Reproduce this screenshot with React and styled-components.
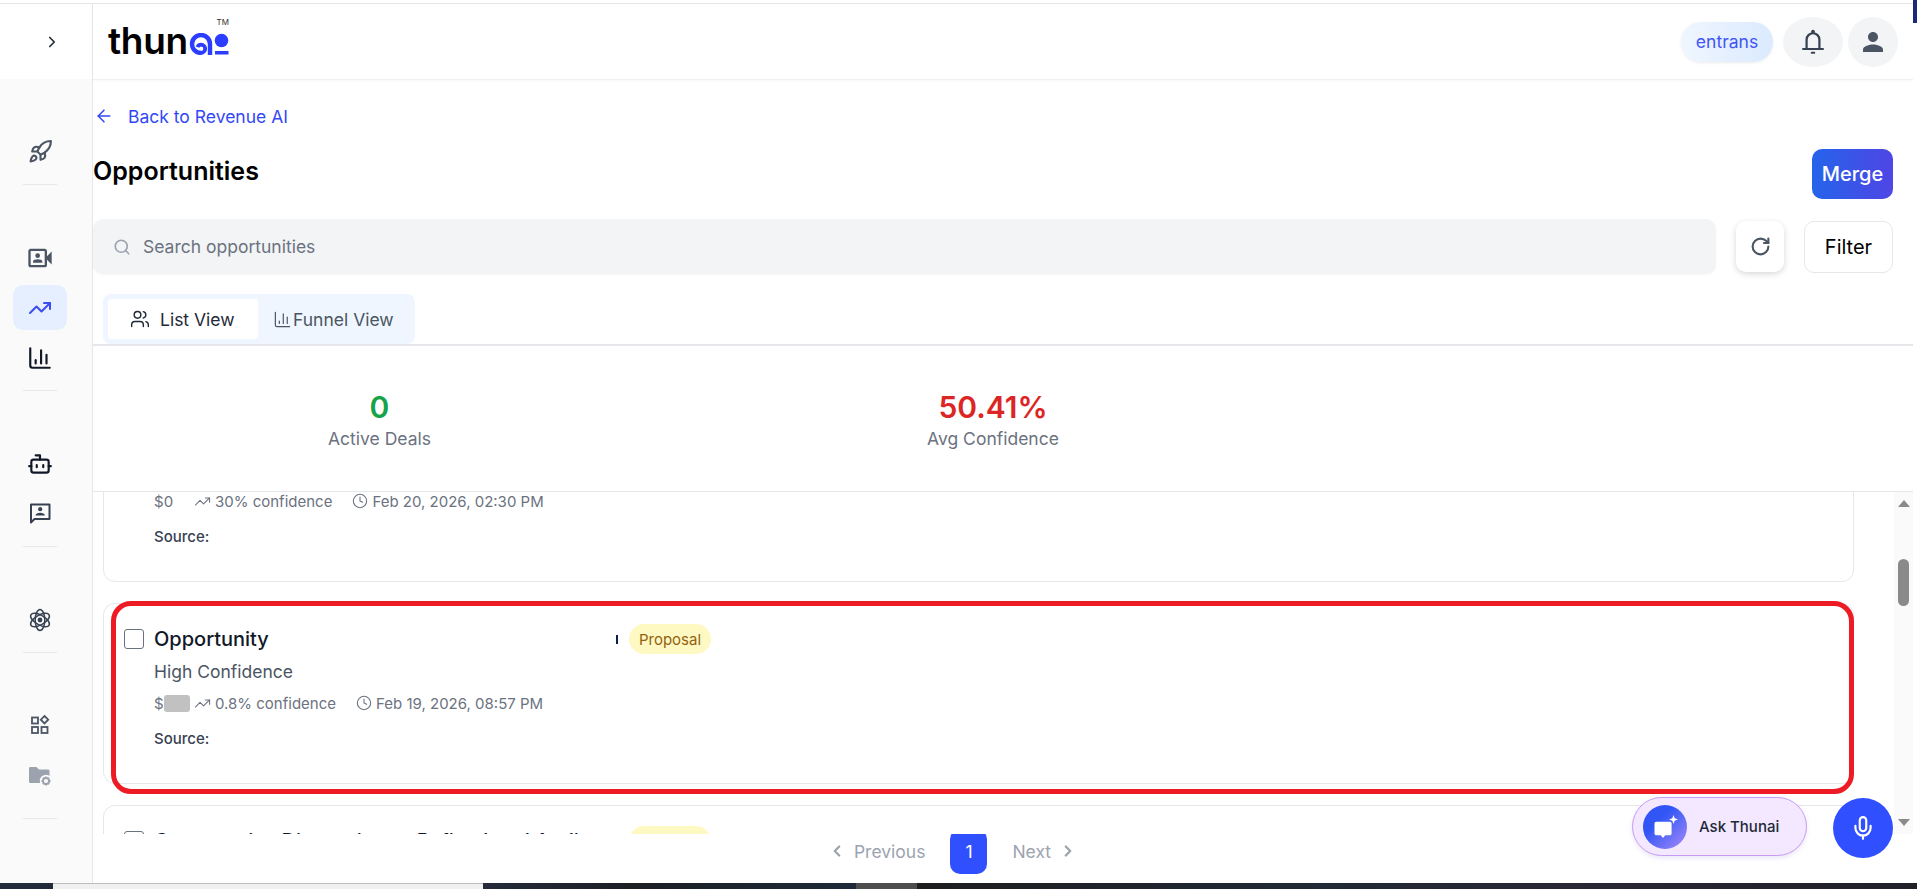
import React from "react";
import styled, { createGlobalStyle } from "styled-components";
import {
  ArrowLeft,
  Bot,
  ChartColumn,
  ChevronLeft,
  ChevronRight,
  Clock,
  Mic,
  RotateCw,
  Rocket,
  Search,
  TrendingUp,
  Users,
} from "lucide-react";
import { MdOutlineVideoCameraFront, MdPerson } from "react-icons/md";

const GlobalStyle = createGlobalStyle`
  html, body, #root {
    margin: 0;
    padding: 0;
    height: 100%;
  }
  body {
    background: #fff;
    font-family: Inter, "Liberation Sans", sans-serif;
    overflow: hidden;
  }
  * {
    box-sizing: border-box;
  }
`;

function BellIcon() {
  return (
    <svg width="28" height="28" viewBox="0 0 24 24" fill="none" stroke="#374151" strokeWidth="1.9" strokeLinecap="round">
      <path d="M6.500 17.500V10a5.500 5.500 0 0 1 11 0v7.500" />
      <path d="M3.500 18h17" />
      <circle cx="12" cy="3.200" r="1.100" fill="#374151" strokeWidth="1" />
      <path d="M11 21.200h2" />
    </svg>
  );
}

function ContactBubbleIcon() {
  return (
    <svg width="24" height="24" viewBox="0 0 24 24" fill="none">
      <path d="M3 3.500h18.500v14.500H6.500L3 21.500z" stroke="#374151" strokeWidth="2" strokeLinejoin="round" />
      <circle cx="12.200" cy="8.200" r="2.100" fill="#374151" />
      <path d="M7.500 14.500c0-1.900 2.400-2.800 4.700-2.800s4.700.9 4.700 2.800z" fill="#374151" />
    </svg>
  );
}

function AtomIcon() {
  return (
    <svg width="24" height="24" viewBox="0 0 24 24" fill="none" stroke="#374151" strokeWidth="1.500">
      <ellipse cx="12" cy="12" rx="4.800" ry="10.500" />
      <ellipse cx="12" cy="12" rx="4.800" ry="10.500" transform="rotate(60 12 12)" />
      <ellipse cx="12" cy="12" rx="4.800" ry="10.500" transform="rotate(120 12 12)" />
      <circle cx="12" cy="12" r="2.400" fill="#374151" stroke="none" />
    </svg>
  );
}

function AppsIcon() {
  return (
    <svg width="22" height="22" viewBox="0 0 22 22" fill="none" stroke="#4b5563" strokeWidth="1.800">
      <rect x="3" y="3.500" width="6" height="6" />
      <rect x="3" y="13" width="6" height="6" />
      <rect x="12.500" y="13" width="6" height="6" />
      <path d="M15.500 2l3.700 3.700-3.700 3.700-3.700-3.700z" />
    </svg>
  );
}

function FolderGearIcon() {
  return (
    <svg width="24" height="24" viewBox="0 0 24 24" fill="none">
      <path d="M1 4.500c0-.8.6-1.500 1.500-1.500h6l2.500 2.500h9c.8 0 1.500.7 1.500 1.500v12H2.500c-.9 0-1.500-.7-1.500-1.500z" fill="#9ca3af" />
      <circle cx="18" cy="17" r="6.200" fill="#fafafa" />
      <circle cx="18" cy="17" r="3" stroke="#9ca3af" strokeWidth="1.800" />
      <path d="M18 12.500v1.500M18 20v1.500M13.500 17H15M21 17h1.500M14.900 13.900l1 1M20.100 19.100l1 1M14.900 20.100l1-1M20.100 14.900l1-1" stroke="#9ca3af" strokeWidth="1.800" />
    </svg>
  );
}

function LogoMark() {
  return (
    <svg width="40" height="22" viewBox="0 0 40 22" fill="none">
      <path d="M21 22V11a9 9 0 1 0-9 9" stroke="#2b3dff" strokeWidth="4.400" />
      <path d="M12 20a4.200 4.200 0 0 0 0-8.400 3.800 3.800 0 0 0-3.500 2.600" stroke="#2b3dff" strokeWidth="3.800" />
      <circle cx="32.500" cy="7.500" r="6.800" fill="#2b3dff" />
      <rect x="26" y="18" width="13.500" height="3.500" fill="#2b3dff" />
    </svg>
  );
}

function AskIcon() {
  return (
    <svg width="28" height="28" viewBox="0 0 28 28" fill="none">
      <path d="M3.500 10.500c0-1 .8-1.800 1.800-1.800h13.500c1 0 1.800.8 1.800 1.800v10c0 1-.8 1.800-1.800 1.800h-4.500L12 25l-2.300-2.700H5.300c-1 0-1.800-.8-1.800-1.800z" fill="#fff" />
      <path d="M22.500 2l1.200 3.300L27 6.500l-3.300 1.200-1.200 3.300-1.200-3.300L18 6.500l3.300-1.200z" fill="#fff" />
    </svg>
  );
}

const Card = ({ title, confidence, amount, blurred, date, stage, highlighted, mark }) => (
  <CardBox>
    <CardHead>
      <Check />
      <CardTitle>{title}</CardTitle>
      <ClippedMark $visible={mark} />
      <Badge>{stage}</Badge>
    </CardHead>
    <CardBody>
      <Confidence>High Confidence</Confidence>
      <Meta>
        <Amount>
          ${amount}
          {blurred && <Redaction />}
        </Amount>
        <MetaGroup>
          <TrendingUp size={17} strokeWidth={1.5} />
          {confidence} confidence
        </MetaGroup>
        <MetaGroup>
          <Clock size={16} strokeWidth={1.6} />
          {date}
        </MetaGroup>
      </Meta>
      <Source>Source:</Source>
    </CardBody>
    {highlighted && <RedOutline />}
  </CardBox>
);

export default function App() {
  return (
    <>
      <GlobalStyle />
      <Page>
        <TopRule />
        <CornerBlock />
        <Body>
          <Sidebar>
            <SideTop>
              <ChevronRight size={18} strokeWidth={2.2} color="#1f2937" />
            </SideTop>
            <SideNav>
              <NavItem $top={58}>
                <Rocket size={25} strokeWidth={2} color="#4b5563" />
              </NavItem>
              <NavRule $top={19} />
              <NavItem $top={59}>
                <MdOutlineVideoCameraFront size={28} color="#4b5563" />
              </NavItem>
              <ActiveItem>
                <TrendingUp size={24} strokeWidth={2} color="#3b4cf5" />
              </ActiveItem>
              <NavItem $top={14}>
                <ChartColumn size={26} strokeWidth={2} color="#111827" />
              </NavItem>
              <NavRule $top={18} />
              <NavItem $top={59}>
                <Bot size={26} strokeWidth={2} color="#111827" />
              </NavItem>
              <NavItem $top={21}>
                <ContactBubbleIcon />
              </NavItem>
              <NavRule $top={19} />
              <NavItem $top={59}>
                <AtomIcon />
              </NavItem>
              <NavRule $top={18} />
              <NavItem $top={58}>
                <AppsIcon />
              </NavItem>
              <NavItem $top={23}>
                <FolderGearIcon />
              </NavItem>
              <NavRule $top={28} />
            </SideNav>
          </Sidebar>

          <Main>
            <Header>
              <Logo>
                <LogoWord>thun</LogoWord>
                <LogoMark />
                <LogoTm>TM</LogoTm>
              </Logo>
              <HeaderRight>
                <OrgPill>entrans</OrgPill>
                <RoundButton $wide>
                  <BellIcon />
                </RoundButton>
                <RoundButton>
                  <MdPerson size={30} color="#4b5563" />
                </RoundButton>
              </HeaderRight>
            </Header>

            <Controls>
              <BackLink>
                <ArrowLeft size={20} strokeWidth={1.8} />
                Back to Revenue AI
              </BackLink>
              <TitleRow>
                <PageTitle>Opportunities</PageTitle>
                <MergeButton>Merge</MergeButton>
              </TitleRow>
              <Toolbar>
                <SearchBox>
                  <Search size={18} strokeWidth={2.2} color="#9ca3af" />
                  Search opportunities
                </SearchBox>
                <RefreshButton>
                  <RotateCw size={21} strokeWidth={2.4} color="#4b5563" />
                </RefreshButton>
                <FilterButton>Filter</FilterButton>
              </Toolbar>
              <Tabs>
                <Tab $active>
                  <Users size={20} strokeWidth={1.7} color="#1f2937" />
                  List View
                </Tab>
                <Tab>
                  <ChartColumn size={19} strokeWidth={1.5} color="#4b5563" />
                  Funnel View
                </Tab>
              </Tabs>
            </Controls>

            <Stats>
              <Stat>
                <StatValue $color="#16a34a">0</StatValue>
                <StatLabel>Active Deals</StatLabel>
              </Stat>
              <Stat>
                <StatValue $color="#dc2626">50.41%</StatValue>
                <StatLabel>Avg Confidence</StatLabel>
              </Stat>
            </Stats>

            <ListArea>
              <List>
                <ListInner>
                  <Card title="Opportunity" amount="0" confidence="30%" date="Feb 20, 2026, 02:30 PM" stage="Proposal" />
                  <Card title="Opportunity" amount="" blurred confidence="0.8%" date="Feb 19, 2026, 08:57 PM" stage="Proposal" highlighted mark />
                  <Card title="Comparative Discussions - Refine Lead Audit" amount="0" confidence="30%" date="Feb 19, 2026, 04:10 PM" stage="Proposal" />
                </ListInner>
              </List>
              <ScrollTrack>
                <ArrowUp />
                <ScrollThumb />
                <ArrowDown />
              </ScrollTrack>
            </ListArea>

            <Pager>
              <PagerLink>
                <ChevronLeft size={18} strokeWidth={3} />
                Previous
              </PagerLink>
              <PageNumber>1</PageNumber>
              <PagerLink>
                Next
                <ChevronRight size={18} strokeWidth={3} />
              </PagerLink>
            </Pager>

            <AskButton>
              <AskCircle>
                <AskIcon />
              </AskCircle>
              Ask Thunai
            </AskButton>
            <MicButton>
              <Mic size={26} strokeWidth={2} color="#fff" />
            </MicButton>
          </Main>
        </Body>
        <Taskbar>
          <TaskSegment $w="53px" $bg="#232a3a" />
          <TaskSegment $w="430px" $bg="#f0f0f0" $line />
          <TaskSegment $w="373px" $bg="linear-gradient(90deg, #252b3b, #1c1f24 40%, #1e2a38)" />
          <TaskSegment $w="61px" $bg="#4d4d4d" />
          <TaskSegment $w="1000px" $bg="linear-gradient(90deg, #1d1d1f, #212a36 40%, #2a2733 70%, #1f2028)" />
        </Taskbar>
      </Page>
    </>
  );
}

const Page = styled.div`
  position: relative;
  display: flex;
  flex-direction: column;
  height: 100vh;
  padding-right: 4px;
  overflow: hidden;
`;

const TopRule = styled.div`
  flex: none;
  height: 4px;
  margin-right: -4px;
  border-bottom: 1px solid #e5e5e5;
`;

const CornerBlock = styled.div`
  position: absolute;
  top: 0;
  right: 0;
  width: 4px;
  height: 23px;
  background: #1b2a78;
`;

const Body = styled.div`
  flex: 1;
  min-height: 0;
  display: flex;
`;

const Sidebar = styled.aside`
  flex: none;
  width: 93px;
  display: flex;
  flex-direction: column;
  border-right: 1px solid #e5e7eb;
  background: #fafafa;
`;

const SideTop = styled.div`
  flex: none;
  height: 75px;
  display: flex;
  align-items: center;
  justify-content: center;
  padding-left: 11px;
  background: #fff;
`;

const SideNav = styled.nav`
  display: flex;
  flex-direction: column;
  align-items: center;
  padding-right: 12px;
`;

const NavItem = styled.div`
  height: 28px;
  display: flex;
  align-items: center;
  justify-content: center;
  margin-top: ${(p) => p.$top}px;
`;

const NavRule = styled.div`
  width: 34px;
  height: 1px;
  margin-top: ${(p) => p.$top}px;
  background: #e5e7eb;
`;

const ActiveItem = styled.div`
  width: 54px;
  height: 45px;
  margin-top: 13px;
  display: flex;
  align-items: center;
  justify-content: center;
  border-radius: 10px;
  background: #e6efff;
`;

const Main = styled.main`
  position: relative;
  flex: 1;
  min-width: 0;
  display: flex;
  flex-direction: column;
`;

const Header = styled.header`
  flex: none;
  height: 76px;
  display: flex;
  align-items: center;
  justify-content: space-between;
  padding: 0 15px;
  border-bottom: 1px solid #f0f0f0;
  box-shadow: 0 1px 2px rgba(0, 0, 0, 0.03);
`;

const Logo = styled.div`
  position: relative;
  display: flex;
  align-items: flex-end;
  gap: 1px;
  height: 28px;
  margin-top: -1px;
`;

const LogoWord = styled.span`
  height: 28px;
  font-size: 37px;
  line-height: 28px;
  font-weight: 600;
  letter-spacing: -0.3px;
  color: #000;
`;

const LogoTm = styled.span`
  position: absolute;
  top: -10px;
  right: 0;
  font-size: 8px;
  color: #333;
`;

const HeaderRight = styled.div`
  display: flex;
  align-items: center;
  gap: 5px;
`;

const OrgPill = styled.div`
  width: 92px;
  height: 40px;
  margin-right: 5px;
  display: flex;
  align-items: center;
  justify-content: center;
  border-radius: 20px;
  font-size: 17.5px;
  color: #3f55f5;
  background: linear-gradient(90deg, #eff6ff, #dbeafe);
  box-shadow: 0 1px 3px rgba(0, 0, 0, 0.08);
`;

const RoundButton = styled.div`
  width: ${(p) => (p.$wide ? 60 : 50)}px;
  height: 50px;
  display: flex;
  align-items: center;
  justify-content: center;
  border-radius: 50%;
  background: #f3f4f6;
`;

const Controls = styled.section`
  flex: none;
  display: flex;
  flex-direction: column;
  padding: 25px 20px 0 0;
`;

const BackLink = styled.div`
  height: 22px;
  display: flex;
  align-items: center;
  gap: 14px;
  padding-left: 1px;
  font-size: 17.5px;
  color: #3348f5;
`;

const TitleRow = styled.div`
  height: 50px;
  margin-top: 22px;
  display: flex;
  align-items: center;
  justify-content: space-between;
`;

const PageTitle = styled.h1`
  margin: -6px 0 0;
  font-size: 25px;
  font-weight: 600;
  color: #000;
`;

const MergeButton = styled.button`
  width: 81px;
  height: 50px;
  padding: 0;
  border: 0;
  border-radius: 10px;
  font-family: inherit;
  font-size: 20px;
  font-weight: 500;
  color: #fff;
  background: linear-gradient(90deg, #2563eb, #4f46e5);
`;

const Toolbar = styled.div`
  height: 55px;
  margin-top: 20px;
  display: flex;
  align-items: center;
`;

const SearchBox = styled.div`
  flex: 1;
  height: 55px;
  display: flex;
  align-items: center;
  gap: 12px;
  padding-left: 20px;
  border-radius: 10px;
  font-size: 17.5px;
  color: #6b7280;
  background: #f3f4f6;
  box-shadow: 0 1px 2px rgba(0, 0, 0, 0.04);
`;

const RefreshButton = styled.div`
  width: 48px;
  height: 51px;
  margin-left: 20px;
  display: flex;
  align-items: center;
  justify-content: center;
  border-radius: 10px;
  background: #fff;
  box-shadow: 0 2px 6px rgba(0, 0, 0, 0.16);
`;

const FilterButton = styled.div`
  width: 89px;
  height: 52px;
  margin-left: 20px;
  display: flex;
  align-items: center;
  justify-content: center;
  border: 1px solid #e5e7eb;
  border-radius: 10px;
  font-size: 20px;
  color: #000;
`;

const Tabs = styled.div`
  width: 312px;
  height: 50px;
  margin: 20px 0 0 10px;
  padding: 5px;
  display: flex;
  border-radius: 8px;
  background: #eff6ff;
`;

const Tab = styled.div`
  width: ${(p) => (p.$active ? "150px" : "auto")};
  display: flex;
  align-items: center;
  gap: ${(p) => (p.$active ? 10 : 1)}px;
  padding-left: ${(p) => (p.$active ? 22 : 15)}px;
  border-radius: 3px;
  font-size: 17.5px;
  color: ${(p) => (p.$active ? "#1f2937" : "#4b5563")};
  background: ${(p) => (p.$active ? "#fff" : "transparent")};
`;

const Stats = styled.section`
  flex: none;
  height: 148px;
  display: grid;
  grid-template-columns: 573px 654px;
  border-top: 2px solid #e5e7eb;
  border-bottom: 1px solid #e5e7eb;
`;

const Stat = styled.div`
  display: flex;
  flex-direction: column;
  align-items: center;
  padding-top: 43px;
`;

const StatValue = styled.div`
  font-size: 30px;
  line-height: 36px;
  font-weight: 600;
  color: ${(p) => p.$color};
`;

const StatLabel = styled.div`
  margin-top: 2px;
  font-size: 17.5px;
  line-height: 24px;
  color: #6b7280;
`;

const ListArea = styled.div`
  flex: 1;
  min-height: 0;
  display: flex;
`;

const List = styled.div`
  flex: 1;
  min-width: 0;
  overflow: hidden;
  padding: 0 40px 0 10px;
`;

const ListInner = styled.div`
  display: flex;
  flex-direction: column;
  gap: 21px;
  margin-top: -91px;
`;

const CardBox = styled.article`
  position: relative;
  flex: none;
  height: 181px;
  padding: 20px;
  border: 1px solid #e5e7eb;
  border-radius: 12px;
  background: #fff;
`;

const RedOutline = styled.div`
  position: absolute;
  top: -3px;
  left: 7px;
  right: -1px;
  bottom: -11px;
  border: 5px solid #ed1c24;
  border-radius: 20px;
  pointer-events: none;
`;

const CardHead = styled.div`
  height: 30px;
  display: flex;
  align-items: center;
`;

const Check = styled.span`
  flex: none;
  width: 20px;
  height: 20px;
  border: 1.5px solid #6b7280;
  border-radius: 3px;
  background: #fff;
`;

const CardTitle = styled.div`
  flex: none;
  width: 462px;
  margin-left: 10px;
  overflow: hidden;
  font-size: 20px;
  font-weight: 500;
  color: #111827;
  white-space: nowrap;
`;

const ClippedMark = styled.span`
  flex: none;
  width: 2px;
  height: 9px;
  margin-right: 11px;
  background: ${(p) => (p.$visible ? "#111c4e" : "transparent")};
`;

const Badge = styled.span`
  flex: none;
  width: 82px;
  height: 30px;
  display: flex;
  align-items: center;
  justify-content: center;
  border-radius: 15px;
  font-size: 15px;
  color: #92610e;
  background: #fef9c3;
`;

const CardBody = styled.div`
  padding-left: 30px;
`;

const Confidence = styled.div`
  margin-top: 6px;
  font-size: 17.5px;
  line-height: 24px;
  color: #4b5563;
`;

const Meta = styled.div`
  height: 20px;
  margin-top: 9px;
  display: flex;
  align-items: center;
  gap: 20px;
  font-size: 15px;
  color: #6b7280;
`;

const Amount = styled.span`
  width: 36px;
  margin-right: -16px;
  display: flex;
  align-items: center;
`;

const Redaction = styled.span`
  width: 26px;
  height: 17px;
  border-radius: 3px;
  background: #c1c1c1;
`;

const MetaGroup = styled.span`
  display: flex;
  align-items: center;
  gap: 4px;
`;

const Source = styled.div`
  margin-top: 16px;
  font-size: 15px;
  line-height: 20px;
  font-weight: 500;
  color: #374151;
`;

const ScrollTrack = styled.div`
  position: relative;
  flex: none;
  width: 19px;
  display: flex;
  flex-direction: column;
  align-items: center;
  background: #fafafa;
`;

const ArrowUp = styled.span`
  margin-top: 8px;
  border-left: 6.5px solid transparent;
  border-right: 6.5px solid transparent;
  border-bottom: 7px solid #8a8a8a;
`;

const ScrollThumb = styled.span`
  width: 11px;
  height: 47px;
  margin-top: 52px;
  border-radius: 6px;
  background: #8a8a8a;
`;

const ArrowDown = styled.span`
  margin-top: auto;
  margin-bottom: 8px;
  border-left: 6.5px solid transparent;
  border-right: 6.5px solid transparent;
  border-top: 7px solid #8a8a8a;
`;

const Pager = styled.nav`
  flex: none;
  height: 54px;
  margin-top: -5px;
  padding: 0 101px 10px 0;
  display: flex;
  align-items: center;
  justify-content: center;
  gap: 25px;
`;

const PagerLink = styled.span`
  display: flex;
  align-items: center;
  gap: 8px;
  font-size: 17.5px;
  color: #9ca3af;
`;

const PageNumber = styled.span`
  width: 37px;
  height: 45px;
  display: flex;
  align-items: center;
  justify-content: center;
  border-radius: 10px;
  font-size: 17.5px;
  color: #fff;
  background: #304fff;
`;

const AskButton = styled.div`
  position: absolute;
  left: 1539px;
  top: 793px;
  width: 175px;
  height: 59px;
  display: flex;
  align-items: center;
  gap: 12px;
  padding-left: 10px;
  border: 1px solid #c79cf3;
  border-radius: 30px;
  font-size: 15px;
  font-weight: 500;
  color: #1f2937;
  background: #f3e8ff;
  box-shadow: 0 2px 5px rgba(120, 80, 200, 0.15);
`;

const AskCircle = styled.span`
  width: 44px;
  height: 44px;
  display: flex;
  align-items: center;
  justify-content: center;
  border-radius: 50%;
  background: linear-gradient(135deg, #3156f5 35%, #a78bfa);
`;

const MicButton = styled.div`
  position: absolute;
  left: 1740px;
  top: 794px;
  width: 60px;
  height: 60px;
  display: flex;
  align-items: center;
  justify-content: center;
  border-radius: 50%;
  background: #304fff;
`;

const Taskbar = styled.div`
  flex: none;
  height: 6px;
  margin-right: -4px;
  display: flex;
`;

const TaskSegment = styled.div`
  flex: none;
  width: ${(p) => p.$w};
  background: ${(p) => p.$bg};
  border-top: ${(p) => (p.$line ? "1px solid #bdbdbd" : "0")};
`;
